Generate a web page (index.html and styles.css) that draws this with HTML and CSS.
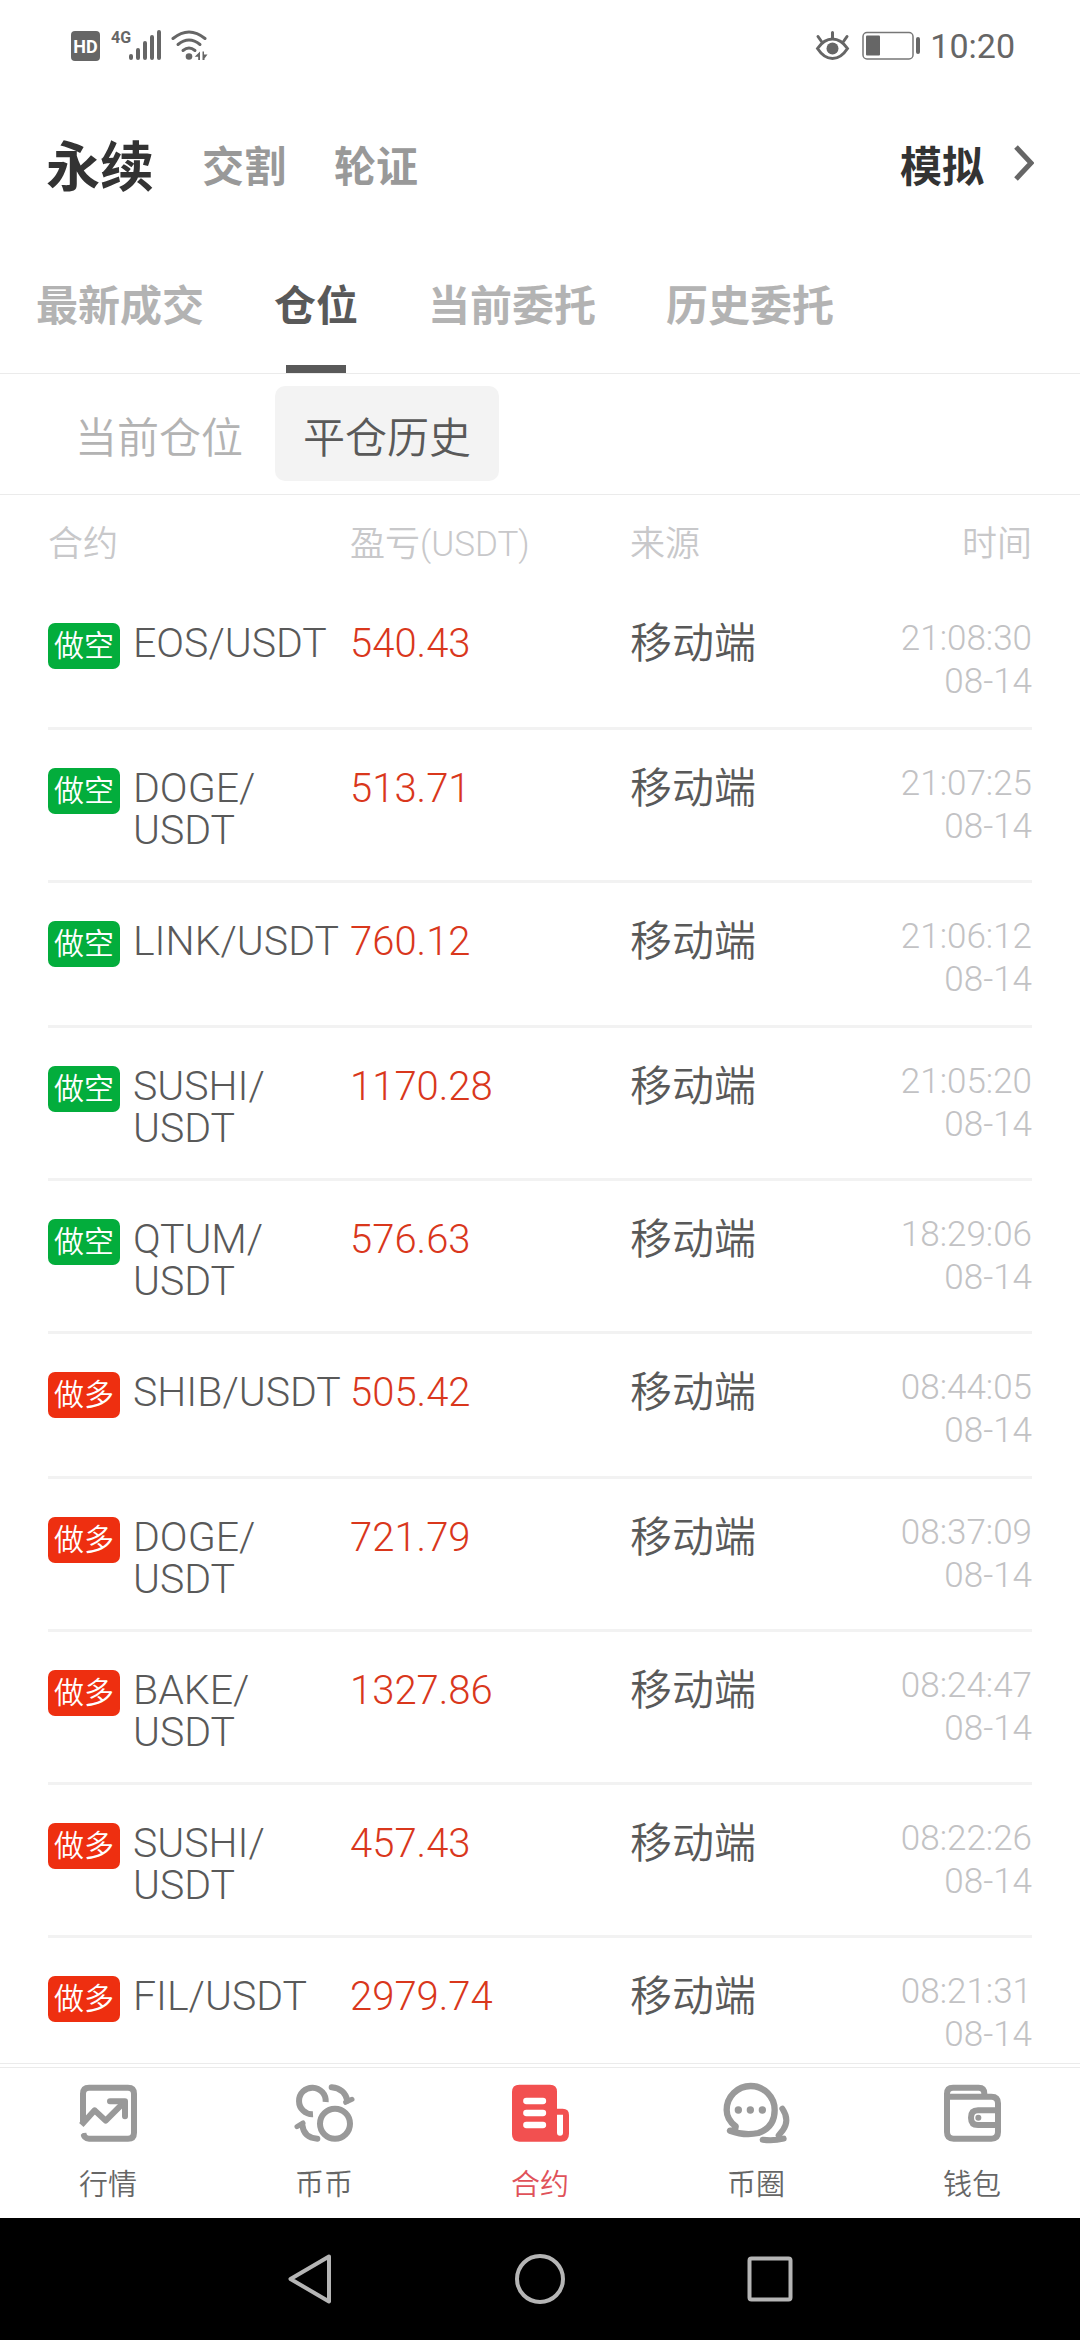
FILE: index.html
```html
<!DOCTYPE html>
<html lang="zh-CN">
<head>
    <meta charset="UTF-8">
    <meta name="viewport" content="width=device-width, initial-scale=1.0">
    <title>平仓历史</title>
    <link rel="stylesheet" href="styles.css">
</head>
<body>
    <!-- 状态栏 -->
    <div class="status-bar">
        <svg class="status-left" viewBox="70 28 140 36">
            <rect x="71" y="31" width="29" height="30" rx="4" fill="#666"/>
            <text x="85.5" y="53" font-size="18" font-weight="700" text-anchor="middle" fill="#fff">HD</text>
            <text x="111" y="43" font-size="16" font-weight="700" fill="#666">4G</text>
            <g stroke="#666" stroke-width="4" stroke-linecap="round">
                <path d="M131 56v2M138 50v8M145 43v15M152 37v21M159 32v26"/>
            </g>
            <g fill="none" stroke="#666" stroke-width="3" stroke-linecap="round">
                <path d="M173 38.500Q189 25.500 205 38.500"/>
                <path d="M178 44.500Q189 35.500 200 44.500"/>
                <path d="M183 50.500Q189 45.500 195 50.500"/>
            </g>
            <circle cx="189" cy="56.500" r="3.300" fill="#666"/>
            <path d="M200 51.500V60h-1.800v-3.200h-3.500zM202.500 60v-8.500l0 0h1.500v3l3.500 0-3 4V60z" fill="#666"/>
        </svg>
        <div class="status-right">
            <svg class="status-eye" viewBox="812 28 38 36">
                <path d="M815.500 48.500Q822 39 830.500 39T845.500 48.500Q839 58.500 830.500 58.500T815.500 48.500Z" fill="none" stroke="#666" stroke-width="3"/>
                <circle cx="830.500" cy="48.500" r="6" fill="#666"/>
                <path d="M830.500 32.500v6M816 36.500l3.500 5M845 36.500l-3.500 5" stroke="#666" stroke-width="3" stroke-linecap="round"/>
            </svg>
            <svg class="status-battery" viewBox="860 28 62 36">
                <rect x="863" y="32.500" width="50" height="26.500" rx="4" fill="none" stroke="#777" stroke-width="1.500"/>
                <rect x="866" y="35.500" width="14" height="20" rx="1" fill="#666"/>
                <rect x="916" y="37" width="4" height="17" rx="2" fill="#666"/>
            </svg>
            <span class="status-time">10:20</span>
        </div>
    </div>

    <!-- 顶部导航 -->
    <header class="top-nav">
        <a href="#" class="top-link active">永续</a>
        <a href="#" class="top-link">交割</a>
        <a href="#" class="top-link">轮证</a>
        <a href="#" class="demo-link">模拟
            <svg class="chevron" viewBox="0 0 20 36"><path d="M2 2l15 16L2 34" fill="none" stroke="#666" stroke-width="5"/></svg>
        </a>
    </header>

    <nav class="tabs">
        <button type="button" class="tab">最新成交</button>
        <button type="button" class="tab active">仓位</button>
        <button type="button" class="tab">当前委托</button>
        <button type="button" class="tab">历史委托</button>
    </nav>

    <div class="sub-tabs">
        <button type="button" class="sub-tab">当前仓位</button>
        <button type="button" class="sub-tab active">平仓历史</button>
    </div>

    <!-- 平仓记录 -->
    <main class="history">
        <table class="history-table">
            <thead>
                <tr>
                    <th class="col-contract">合约</th>
                    <th class="col-profit">盈亏(USDT)</th>
                    <th class="col-source">来源</th>
                    <th class="col-time">时间</th>
                </tr>
            </thead>
            <tbody>
                <tr>
                    <td><div class="contract"><span class="badge short">做空</span><span class="name">EOS/USDT</span></div></td>
                    <td class="profit">540.43</td>
                    <td class="source">移动端</td>
                    <td class="time">21:08:30<br>08-14</td>
                </tr>
                <tr>
                    <td><div class="contract"><span class="badge short">做空</span><span class="name">DOGE/<br>USDT</span></div></td>
                    <td class="profit">513.71</td>
                    <td class="source">移动端</td>
                    <td class="time">21:07:25<br>08-14</td>
                </tr>
                <tr>
                    <td><div class="contract"><span class="badge short">做空</span><span class="name">LINK/USDT</span></div></td>
                    <td class="profit">760.12</td>
                    <td class="source">移动端</td>
                    <td class="time">21:06:12<br>08-14</td>
                </tr>
                <tr>
                    <td><div class="contract"><span class="badge short">做空</span><span class="name">SUSHI/<br>USDT</span></div></td>
                    <td class="profit">1170.28</td>
                    <td class="source">移动端</td>
                    <td class="time">21:05:20<br>08-14</td>
                </tr>
                <tr>
                    <td><div class="contract"><span class="badge short">做空</span><span class="name">QTUM/<br>USDT</span></div></td>
                    <td class="profit">576.63</td>
                    <td class="source">移动端</td>
                    <td class="time">18:29:06<br>08-14</td>
                </tr>
                <tr>
                    <td><div class="contract"><span class="badge long">做多</span><span class="name">SHIB/USDT</span></div></td>
                    <td class="profit">505.42</td>
                    <td class="source">移动端</td>
                    <td class="time">08:44:05<br>08-14</td>
                </tr>
                <tr>
                    <td><div class="contract"><span class="badge long">做多</span><span class="name">DOGE/<br>USDT</span></div></td>
                    <td class="profit">721.79</td>
                    <td class="source">移动端</td>
                    <td class="time">08:37:09<br>08-14</td>
                </tr>
                <tr>
                    <td><div class="contract"><span class="badge long">做多</span><span class="name">BAKE/<br>USDT</span></div></td>
                    <td class="profit">1327.86</td>
                    <td class="source">移动端</td>
                    <td class="time">08:24:47<br>08-14</td>
                </tr>
                <tr>
                    <td><div class="contract"><span class="badge long">做多</span><span class="name">SUSHI/<br>USDT</span></div></td>
                    <td class="profit">457.43</td>
                    <td class="source">移动端</td>
                    <td class="time">08:22:26<br>08-14</td>
                </tr>
                <tr>
                    <td><div class="contract"><span class="badge long">做多</span><span class="name">FIL/USDT</span></div></td>
                    <td class="profit">2979.74</td>
                    <td class="source">移动端</td>
                    <td class="time">08:21:31<br>08-14</td>
                </tr>
            </tbody>
        </table>
    </main>

    <!-- 底部菜单 -->
    <footer class="bottom-bar">
        <a href="#" class="bottom-item">
            <svg class="bottom-icon" viewBox="216 94 216 192" fill="none" stroke="#999" stroke-width="18">
                <path d="M249 222V132Q249 114 267 114H384Q402 114 402 132V249Q402 267 384 267H267Q252 267 250 250"/>
                <path d="M244 226L284 182L317 213L374 156" stroke-linejoin="round"/>
                <path d="M330 155H375V200" stroke-linecap="round" stroke-linejoin="round"/>
                <path d="M236 255L262 232" stroke="#fff" stroke-width="9"/>
            </svg>
            <span>行情</span>
        </a>
        <a href="#" class="bottom-item">
            <svg class="bottom-icon" viewBox="864 94 216 192" fill="none" stroke="#999" stroke-width="18">
                <path d="M977 157A40 40 0 1 0 939 194"/>
                <circle cx="1005" cy="222" r="45"/>
                <g stroke-linecap="round" stroke-linejoin="round">
                    <path d="M995 113Q1034 117 1042 153"/>
                    <path d="M952 267Q911 264 907 226"/>
                </g>
                <path d="M1037 158L1056 149M909 220L891 231" stroke-linecap="round" stroke-width="15"/>
            </svg>
            <span>币币</span>
        </a>
        <a href="#" class="bottom-item active">
            <svg class="bottom-icon" viewBox="312 94 216 192">
                <path d="M358 105H450Q471 105 471 126V177H488Q507 177 507 196V252Q507 276 483 276H358Q336 276 336 254V127Q336 105 358 105Z" fill="#f25050"/>
                <path d="M379 154H429M379 190H429M379 226H429" stroke="#fff" stroke-width="19" stroke-linecap="round"/>
                <path d="M471 195H489V249Q489 258 480 258T471 249Z" fill="#fff"/>
            </svg>
            <span>合约</span>
        </a>
        <a href="#" class="bottom-item">
            <svg class="bottom-icon" viewBox="960 94 216 192" fill="none" stroke="#999" stroke-width="18" stroke-linecap="round" stroke-linejoin="round">
                <path d="M990 243Q1008 244 1007 230Q980 210 980 181A72 72 0 0 1 1124 181Q1124 233 1075 250Q1034 259 990 243Z" stroke-width="19"/>
                <path d="M1147 177Q1170 211 1149 241L1136 257M1088 270Q1120 274 1151 267"/>
                <g fill="#999" stroke="none"><circle cx="1015" cy="181" r="11"/><circle cx="1051" cy="181" r="11"/><circle cx="1087" cy="181" r="11"/></g>
            </svg>
            <span>币圈</span>
        </a>
        <a href="#" class="bottom-item">
            <svg class="bottom-icon" viewBox="468 94 216 192" fill="none" stroke="#999" stroke-width="18">
                <path d="M501 141V247Q501 267 521 267H634Q654 267 654 247V161Q654 141 634 141H501V132Q501 114 519 114H596Q613 114 613 132V141"/>
                <path d="M654 182H594Q573 182 573 204T594 226H654"/>
                <circle cx="595" cy="204" r="9" fill="#999" stroke="none"/>
            </svg>
            <span>钱包</span>
        </a>
    </footer>

    <!-- 系统按键 -->
    <div class="system-nav">
        <button type="button" class="system-btn" aria-label="返回">
            <svg viewBox="0 0 50 50"><path d="M44 2.500L5.500 25L44 47.500Z" fill="none" stroke="#b5b5b5" stroke-width="4" stroke-linejoin="round"/></svg>
        </button>
        <button type="button" class="system-btn" aria-label="主页">
            <svg viewBox="0 0 50 50"><circle cx="25" cy="25" r="23" fill="none" stroke="#b5b5b5" stroke-width="4"/></svg>
        </button>
        <button type="button" class="system-btn" aria-label="最近任务">
            <svg viewBox="0 0 50 50"><rect x="4.500" y="4.500" width="41" height="41" rx="2" fill="none" stroke="#b5b5b5" stroke-width="4"/></svg>
        </button>
    </div>
</body>
</html>
```
FILE: styles.css
```css
* {
    box-sizing: border-box;
}

body {
    margin: 0;
    height: 100vh;
    display: flex;
    flex-direction: column;
    background-color: #fff;
    color: #595959;
    font-family: Roboto, "Noto Sans CJK SC", sans-serif;
    font-weight: 350;
}

a {
    color: inherit;
    text-decoration: none;
}

button {
    padding: 0;
    border: none;
    background: none;
    font-family: inherit;
    cursor: pointer;
}

svg {
    display: block;
}

/* 状态栏 */
.status-bar {
    flex: none;
    display: flex;
    justify-content: space-between;
    align-items: center;
    height: 92px;
    padding: 0 65px 0 70px;
    color: #666;
}

.status-left {
    width: 140px;
    height: 36px;
}

.status-right {
    display: flex;
    align-items: center;
    gap: 8px;
}

.status-eye {
    width: 38px;
    height: 36px;
}

.status-battery {
    width: 62px;
    height: 36px;
}

.status-time {
    font-size: 34px;
    font-weight: 400;
    line-height: 40px;
}

/* 顶部导航 */
.top-nav {
    flex: none;
    display: flex;
    align-items: center;
    gap: 48px;
    height: 142px;
    padding: 0 46px 0 46px;
    font-size: 42px;
    font-weight: 700;
}

.top-link {
    color: #999;
}

.top-link.active {
    color: #333;
    font-size: 54px;
}

.demo-link {
    display: flex;
    align-items: center;
    gap: 30px;
    margin-left: auto;
    color: #333;
}

.chevron {
    width: 20px;
    height: 36px;
}

/* 标签 */
.tabs {
    flex: none;
    display: flex;
    gap: 70px;
    height: 140px;
    padding: 0 36px;
    border-bottom: 1px solid #ebebeb;
}

.tab {
    display: flex;
    flex-direction: column;
    align-items: center;
    justify-content: center;
    position: relative;
    padding-bottom: 2px;
    color: #b3b3b3;
    font-size: 42px;
    font-weight: 700;
}

.tab.active {
    color: #595959;
}

.tab.active::after {
    content: "";
    position: absolute;
    bottom: 0;
    width: 60px;
    height: 8px;
    background-color: #595959;
}

.sub-tabs {
    flex: none;
    display: flex;
    gap: 4px;
    padding: 12px 47px 13px;
    border-bottom: 1px solid #ebebeb;
}

.sub-tab {
    height: 95px;
    padding: 2px 28px 0;
    border-radius: 10px;
    color: #b3b3b3;
    font-size: 42px;
    font-weight: 350;
}

.sub-tab.active {
    background-color: #f3f3f3;
    color: #595959;
}

/* 记录表格 */
.history {
    flex: 1;
    min-height: 0;
    overflow: hidden;
    padding: 0 48px;
    border-bottom: 1px solid #ebebeb;
}

.history-table {
    width: 100%;
    table-layout: fixed;
    border-collapse: separate;
    border-spacing: 0;
}

.history-table th {
    height: 90px;
    padding: 0;
    color: #c8c8ca;
    font-size: 35px;
    font-weight: 350;
    text-align: left;
}

.history-table .col-contract {
    width: 302px;
}

.history-table .col-profit {
    width: 280px;
}

.history-table .col-time {
    text-align: right;
}

.history-table td {
    padding: 32px 0 24px;
    border-bottom: 3px solid #f2f2f2;
    vertical-align: top;
}

.contract {
    display: flex;
    gap: 13px;
    padding: 5px 0;
}

.badge {
    flex: none;
    width: 72px;
    height: 46px;
    margin-top: 1px;
    border-radius: 7px;
    color: #fff;
    font-size: 30px;
    line-height: 46px;
    text-align: center;
}

.badge.short {
    background-color: #03ad3c;
}

.badge.long {
    background-color: #ee2f10;
}

.name {
    font-size: 41px;
    line-height: 42px;
    white-space: nowrap;
}

.history-table .profit,
.history-table .source {
    padding-top: 38px;
    font-size: 40px;
    line-height: 42px;
}

.history-table .profit {
    color: #d9371c;
}

.history-table .source {
    font-size: 42px;
}

.history-table .time {
    color: #c2c2c4;
    font-size: 35px;
    line-height: 43px;
    text-align: right;
}

/* 底部菜单 */
.bottom-bar {
    flex: none;
    display: flex;
    margin-top: 3px;
    height: 151px;
    border-top: 1px solid #ebebeb;
}

.bottom-item {
    flex: 1;
    display: flex;
    flex-direction: column;
    align-items: center;
    gap: 20px;
    padding-top: 13px;
    color: #666;
    font-size: 29px;
    line-height: 40px;
}

.bottom-item.active {
    color: #e0525a;
}

.bottom-icon {
    width: 72px;
    height: 64px;
}

/* 系统按键 */
.system-nav {
    flex: none;
    display: flex;
    justify-content: center;
    align-items: center;
    gap: 180px;
    height: 122px;
    background-color: #000;
}

.system-btn {
    width: 50px;
    height: 50px;
}
```
